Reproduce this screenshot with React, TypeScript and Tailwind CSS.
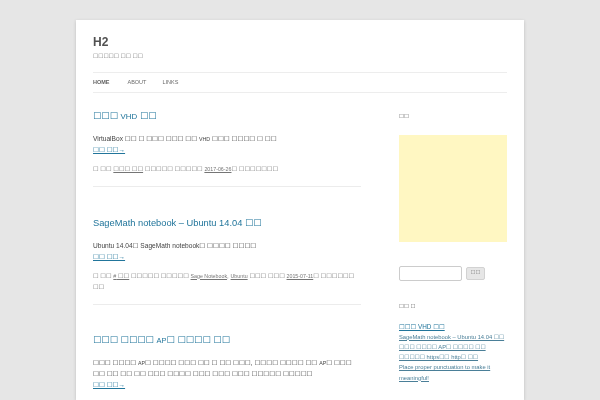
const Sq = ({ n }: { n: number }) => <>{"☐".repeat(n)}</>;

// small latin bits inside the korean lines; leading-[0] keeps them from growing the line box
const Sm = ({ children, s = "0.8em" }: { children: React.ReactNode; s?: string }) => (
  <span className={`leading-[0] ${s === "0.8em" ? "text-[0.8em]" : "text-[0.85em]"}`}>{children}</span>
);

const posts = [
  {
    title: (
      <>
        <Sq n={3} /> <Sm s="0.85em">VHD</Sm> <Sq n={2} />
      </>
    ),
    body: (
      <>
        VirtualBox <Sq n={2} /> <Sq n={1} /> <Sq n={3} /> <Sq n={3} /> <Sq n={2} /> <Sm>VHD</Sm>{" "}
        <Sq n={3} /> <Sq n={4} /> <Sq n={1} /> <Sq n={2} />
      </>
    ),
    meta: (
      <>
        <Sq n={1} /> <Sq n={2} /> <a className="underline">☐☐☐ ☐☐</a> <Sq n={5} /> <Sq n={5} />{" "}
        <a className="underline">
          <Sm s="0.85em">2017-06-26</Sm>
        </a>
        <Sq n={1} /> <Sq n={7} />
      </>
    ),
  },
  {
    title: (
      <>
        SageMath notebook – Ubuntu 14.04 <Sq n={2} />
      </>
    ),
    body: (
      <>
        Ubuntu 14.04☐ SageMath notebook☐ <Sq n={4} /> <Sq n={4} />
      </>
    ),
    meta: (
      <>
        <Sq n={1} /> <Sq n={2} />{" "}
        <a className="underline">
          <Sm s="0.85em">#</Sm> ☐☐
        </a>{" "}
        <Sq n={5} /> <Sq n={5} />{" "}
        <a className="underline">
          <Sm s="0.85em">Sage Notebook</Sm>
        </a>
        ,{" "}
        <a className="underline">
          <Sm s="0.85em">Ubuntu</Sm>
        </a>{" "}
        <Sq n={3} /> <Sq n={3} />{" "}
        <a className="underline">
          <Sm s="0.85em">2015-07-11</Sm>
        </a>
        <Sq n={1} /> <Sq n={6} /> <Sq n={2} />
      </>
    ),
  },
  {
    title: (
      <>
        <Sq n={3} /> <Sq n={4} /> <Sm>AP</Sm>
        <Sq n={1} /> <Sq n={4} /> <Sq n={2} />
      </>
    ),
    body: (
      <>
        <Sq n={3} /> <Sq n={4} /> <Sm>AP</Sm>☐ <Sq n={4} /> <Sq n={3} /> <Sq n={2} /> <Sq n={1} />{" "}
        <Sq n={2} /> <Sq n={3} />, <Sq n={4} /> <Sq n={4} /> <Sq n={2} /> <Sm>AP</Sm>☐ <Sq n={3} />{" "}
        <Sq n={2} /> <Sq n={2} /> <Sq n={2} /> <Sq n={2} /> <Sq n={3} /> <Sq n={4} /> <Sq n={3} />{" "}
        <Sq n={3} /> <Sq n={3} /> <Sq n={5} /> <Sq n={5} />
      </>
    ),
    meta: null,
  },
];

const recent = [
  "☐☐☐ VHD ☐☐",
  "SageMath notebook – Ubuntu 14.04 ☐☐",
  "☐☐☐ ☐☐☐☐ AP☐ ☐☐☐☐ ☐☐",
  "☐☐☐☐☐ https☐☐ http☐ ☐☐",
  "Place proper punctuation to make it meaningful!",
];

export default function App() {
  return (
    <div className="min-h-screen bg-[#e6e6e6] pt-[20px] font-['Liberation_Sans','DejaVu_Sans',sans-serif]">
      <div className="mx-auto min-h-[380px] w-[448px] bg-white px-[17px] shadow-[0_1px_3px_rgba(100,100,100,0.3)] [will-change:transform]">
        <header className="pt-[15px]">
          <h1 className="text-[12px] font-bold leading-[15px] text-[#515151]">H2</h1>
          <p className="text-[5.8px] leading-[12px] text-[#757575]">☐☐☐☐☐ ☐☐ ☐☐</p>
          <nav className="mt-[10px] flex h-[21px] items-center border-y border-[#ededed] text-[5.5px] uppercase text-[#6a6a6a]">
            <a className="mr-[18px] font-bold text-[#636363]">Home</a>
            <a className="mr-[16px]">About</a>
            <a>Links</a>
          </nav>
        </header>

        <div className="mt-[18px] flex justify-between">
          <main className="w-[268px]">
            {posts.map((p, i) => (
              <article
                key={i}
                className={`${i > 0 ? "mt-[30.5px]" : ""} ${p.meta ? "border-b border-[#ececec] pb-[12px]" : ""}`}
              >
                <h2 className="text-[9.3px] leading-[11px] text-[#21759b]">{p.title}</h2>
                <div className="mt-[11px] text-[6.6px] leading-[11px] text-[#444]">
                  <p>{p.body}</p>
                  <a className="block text-[#21759b] underline">☐☐ ☐☐→</a>
                </div>
                {p.meta && (
                  <footer className="mt-[8px] text-[6.25px] leading-[11px] text-[#757575]">{p.meta}</footer>
                )}
              </article>
            ))}
          </main>

          <aside className="w-[108px]">
            <h3 className="text-[5.5px] font-bold leading-[11px] text-[#636363]">☐☐</h3>
            <div className="mt-[12.5px] h-[107px] w-[108px] bg-[#fff7c2]" />
            <form className="mt-[24px] flex items-center">
              <input className="h-[15px] w-[63px] rounded-[2px] border border-[#cccccc] bg-white" />
              <button
                type="button"
                className="ml-[4px] h-[13px] w-[19px] rounded-[2px] border border-[#d2d2d2] bg-[#e6e6e6] text-[5.5px] leading-none text-[#7c7c7c]"
              >
                ☐☐
              </button>
            </form>
            <h3 className="mt-[20px] text-[5.5px] font-bold leading-[11px] text-[#636363]">☐☐ ☐</h3>
            <ul className="mt-[10px] text-[5.8px] leading-[10.2px]">
              {recent.map((r, i) => (
                <li key={i}>
                  <a className={`underline ${i === 0 ? "text-[6.4px] text-[#21759b]" : "text-[#4a7f98]"}`}>{r}</a>
                </li>
              ))}
            </ul>
          </aside>
        </div>
      </div>
    </div>
  );
}
